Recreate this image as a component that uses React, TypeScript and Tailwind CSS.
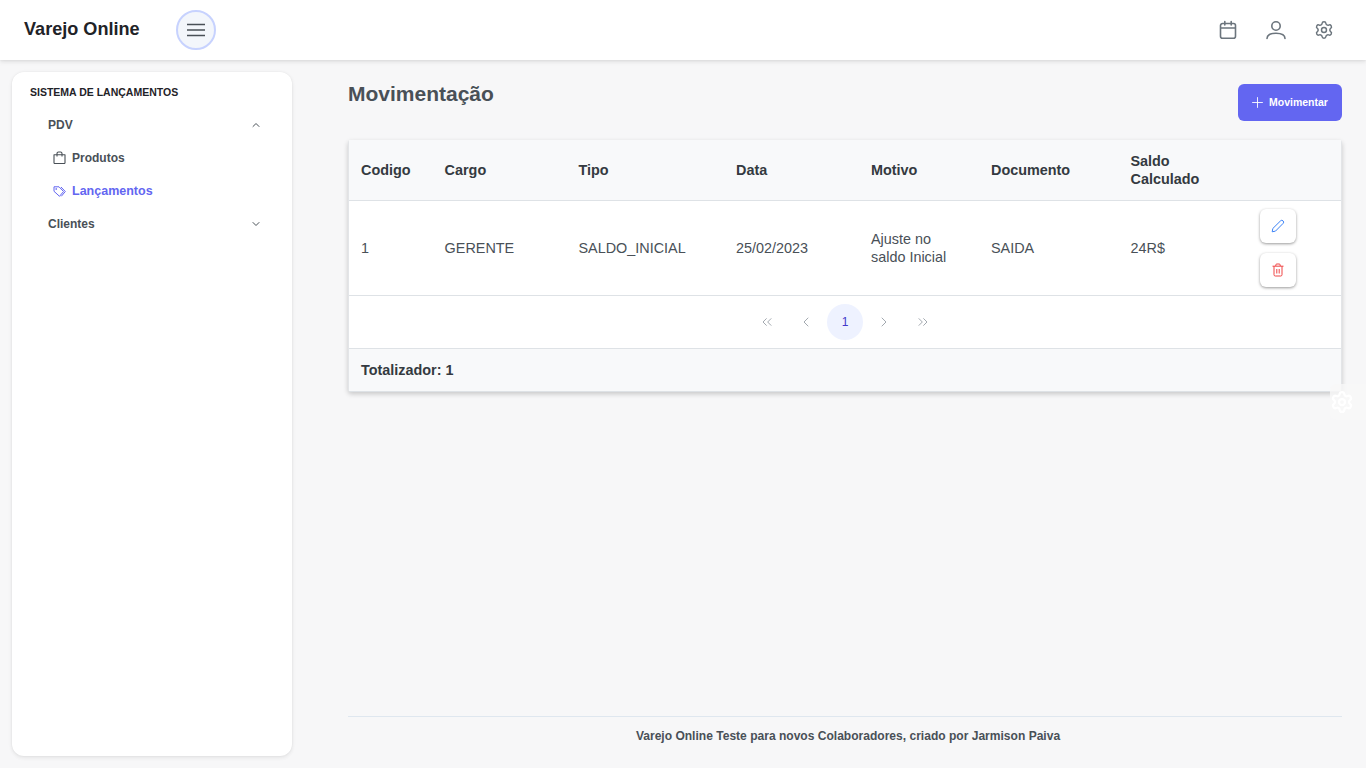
import { Settings, Plus, ChevronUp, ChevronDown, ChevronLeft, ChevronRight, ChevronsLeft, ChevronsRight } from 'lucide-react';

const th = 'px-3 pt-[2px] text-left align-middle text-[14.4px] leading-[17.5px] font-bold text-[#343a40]';
const td = 'px-3 text-left align-middle text-[14.4px] leading-[18px] text-[#495057]';

export default function App() {
  return (
    <div className="h-[768px] overflow-hidden bg-[#f7f7f8] font-['Liberation_Sans',Arial,sans-serif] relative flex flex-col">
      {/* Topbar */}
      <header className="h-[60px] shrink-0 bg-white shadow-[0_3px_5px_rgba(0,0,0,0.04),0_0_2px_rgba(0,0,0,0.06),0_1px_4px_rgba(0,0,0,0.08)] flex items-center pl-6 pr-[32px] z-10">
        <span className="text-[18.1px] leading-[18px] font-bold text-[#1f2328] w-[152px] mb-[2px]">Varejo Online</span>
        <button aria-label="Menu" className="w-10 h-10 rounded-full bg-[#f3f6fb] border-2 border-[#c7d2fe] flex items-center justify-center">
          <svg className="w-5 h-5 text-[#495057]" fill="none" stroke="currentColor" viewBox="0 0 20 20" strokeWidth={1.5}>
            <path d="M1 4.5h18M1 10h18M1 15.5h18" />
          </svg>
        </button>
        <div className="ml-auto flex items-center gap-7 text-[#6c757d]">
          <span className="mr-[1px]"><CalendarIcon /></span>
          <UserIcon />
          <Settings className="w-5 h-5" strokeWidth={1.75} />
        </div>
      </header>

      <div className="flex-1 flex min-h-0">
        {/* Sidebar */}
        <aside className="w-[280px] ml-3 mt-3 mb-3 shrink-0 bg-white rounded-xl shadow-[0_3px_5px_rgba(0,0,0,0.02),0_0_2px_rgba(0,0,0,0.05),0_1px_4px_rgba(0,0,0,0.08)] pt-[13px] pl-[18px] pr-[30px]">
          <div className="text-[10.5px] leading-[14px] font-bold text-[#1f2328] uppercase">Sistema de lançamentos</div>
          <div className="mt-[9px] flex flex-col">
            <div className="h-[33px] pl-[18px] flex items-center justify-between text-[#495057]">
              <span className="text-xs font-bold">PDV</span>
              <ChevronUp className="w-3 h-3" strokeWidth={2} />
            </div>
            <div className="h-[33px] pl-[23px] flex items-center gap-[6px] text-[#495057]">
              <BagIcon />
              <span className="text-xs font-bold">Produtos</span>
            </div>
            <div className="h-[33px] pl-[23px] pt-[1px] flex items-center gap-[6px] text-[#6366f1]">
              <TagsIcon />
              <span className="text-[12.5px] font-bold">Lançamentos</span>
            </div>
            <div className="h-[33px] pl-[18px] flex items-center justify-between text-[#495057]">
              <span className="text-xs font-bold">Clientes</span>
              <ChevronDown className="w-3 h-3" strokeWidth={2} />
            </div>
          </div>
        </aside>

        {/* Main */}
        <main className="flex-1 min-w-0 ml-[56px] mr-6 flex flex-col">
          <div className="flex items-start justify-between h-[80px] pt-[24px]">
            <h1 className="text-[21px] leading-[21px] font-bold text-[#495057] -mt-[1px]">Movimentação</h1>
            <button className="w-[104px] h-[37px] rounded-md bg-[#6366f1] text-white flex items-center justify-center gap-[3px] pr-[3px]">
              <Plus className="w-[17px] h-[17px]" strokeWidth={1.25} />
              <span className="text-[10.5px] font-bold">Movimentar</span>
            </button>
          </div>

          <div className="bg-white rounded-[3px] border-x border-[#e3e5e8] shadow-[0_2px_5px_rgba(0,0,0,0.2)]">
            <table className="w-full table-fixed border-collapse">
              <thead>
                <tr className="h-[60px] bg-[#f8f9fa] border-b border-[#dee2e6]">
                  <th className={`${th} w-[83.6px]`}>Codigo</th>
                  <th className={`${th} w-[133.9px]`}>Cargo</th>
                  <th className={`${th} w-[157.5px]`}>Tipo</th>
                  <th className={`${th} w-[135px]`}>Data</th>
                  <th className={`${th} w-[120px]`}>Motivo</th>
                  <th className={`${th} w-[139.5px]`}>Documento</th>
                  <th className={`${th} w-[129.5px]`}>Saldo Calculado</th>
                  <th className={`${th} w-[93px]`}></th>
                </tr>
              </thead>
              <tbody>
                <tr className="h-[95px] border-b border-[#dee2e6]">
                  <td className={td}>1</td>
                  <td className={td}>GERENTE</td>
                  <td className={td}>SALDO_INICIAL</td>
                  <td className={td}>25/02/2023</td>
                  <td className={td}>Ajuste no saldo Inicial</td>
                  <td className={td}>SAIDA</td>
                  <td className={td}>24R$</td>
                  <td className="px-3 align-middle">
                    <div className="flex flex-col gap-[10px]">
                      <button aria-label="Editar" className="w-9 h-[34px] rounded-md bg-white shadow-[0_1px_3px_rgba(0,0,0,0.4)] flex items-center justify-center text-[#3b82f6]">
                        <PencilIcon />
                      </button>
                      <button aria-label="Excluir" className="w-9 h-[34px] rounded-md bg-white shadow-[0_1px_3px_rgba(0,0,0,0.4)] flex items-center justify-center text-[#ef4444]">
                        <TrashIcon />
                      </button>
                    </div>
                  </td>
                </tr>
              </tbody>
            </table>

            {/* Paginator */}
            <div className="h-[53px] flex items-center justify-center gap-[3px] border-b border-[#dee2e6] text-[#a3a9b0]">
              <span className="w-9 h-9 flex items-center justify-center"><ChevronsLeft className="w-4 h-4" strokeWidth={1.5} /></span>
              <span className="w-9 h-9 flex items-center justify-center"><ChevronLeft className="w-4 h-4" strokeWidth={1.5} /></span>
              <span className="w-9 h-9 rounded-full bg-[#eef2ff] text-[#4338ca] text-xs flex items-center justify-center">1</span>
              <span className="w-9 h-9 flex items-center justify-center"><ChevronRight className="w-4 h-4" strokeWidth={1.5} /></span>
              <span className="w-9 h-9 flex items-center justify-center"><ChevronsRight className="w-4 h-4" strokeWidth={1.5} /></span>
            </div>

            <div className="h-[43px] pt-[2px] bg-[#f8f9fa] flex items-center px-3 text-[14.4px] font-bold text-[#343a40] border-b border-[#dee2e6]">
              Totalizador: 1
            </div>
          </div>

          {/* Footer */}
          <footer className="mt-auto h-[52px] border-t border-[#dfe7ef] flex items-start justify-center pt-[12px] pl-[6px]">
            <span className="text-[12.06px] leading-[14px] font-bold text-[#495057]">
              Varejo Online Teste para novos Colaboradores, criado por Jarmison Paiva
            </span>
          </footer>
        </main>
      </div>

      {/* Config floating button */}
      <div className="absolute right-0 top-[384px] w-9 h-9 bg-[#f7f7f8]/80 rounded-l-md flex items-center z-20">
        <Settings className="w-6 h-6 text-white" strokeWidth={2.25} />
      </div>
    </div>
  );
}

function CalendarIcon() {
  return (
    <svg className="w-[18px] h-[20px]" fill="none" stroke="currentColor" viewBox="0 0 18 20" strokeWidth={1.6} strokeLinecap="round" strokeLinejoin="round">
      <path d="M3.5 3.5h11a2 2 0 012 2v10.8a2 2 0 01-2 2h-11a2 2 0 01-2-2V5.500a2 2 0 012-2zM1.500 8h15M5.800 1.500v3.500M12.200 1.500v3.500" />
    </svg>
  );
}

function UserIcon() {
  return (
    <svg className="w-5 h-5" fill="none" stroke="currentColor" viewBox="0 0 20 20" strokeWidth={1.6} strokeLinecap="round">
      <circle cx="10" cy="6" r="4.200" />
      <path d="M1 18.500c0-3.600 3.500-5.300 9-5.300s9 1.700 9 5.300" />
    </svg>
  );
}

function BagIcon() {
  return (
    <svg className="w-[13px] h-[13px] shrink-0" fill="none" stroke="currentColor" viewBox="0 0 13 13" strokeWidth={1.1} strokeLinejoin="round">
      <path d="M1 3.800h11v8a.7.7 0 01-.7.7H1.700a.7.7 0 01-.7-.7zM4 5.500V2.500a1.500 1.500 0 011.500-1.500h2A1.500 1.500 0 019 2.500v3" />
    </svg>
  );
}

function TagsIcon() {
  return (
    <svg className="w-[13px] h-[13px] shrink-0" fill="none" stroke="currentColor" viewBox="0 0 13 13" strokeWidth={1} strokeLinejoin="round">
      <path d="M1 1.800h5l4.500 4.700-4 4.800L1 6.300z" />
      <path d="M8 2l4.300 4.500-4 4.800" />
      <circle cx="3.200" cy="4" r=".5" />
    </svg>
  );
}

function PencilIcon() {
  return (
    <svg className="w-[14px] h-[14px]" fill="none" stroke="currentColor" viewBox="0 0 14 14" strokeWidth={1} strokeLinejoin="round">
      <path d="M1.200 12.800l.6-3.300L9.500 1.900a1.800 1.800 0 012.600 2.500L4.500 12.100z" />
    </svg>
  );
}

function TrashIcon() {
  return (
    <svg className="w-[14px] h-[14px]" fill="none" stroke="currentColor" viewBox="0 0 14 14" strokeWidth={1} strokeLinejoin="round">
      <path d="M1.500 3.200h11M3 3.200v8.500a1.300 1.300 0 001.300 1.300h5.400a1.300 1.300 0 001.300-1.300V3.200M4.800 3V2a1 1 0 011-1h2.400a1 1 0 011 1v1M5.800 6v4.500M8.200 6v4.500" />
    </svg>
  );
}
